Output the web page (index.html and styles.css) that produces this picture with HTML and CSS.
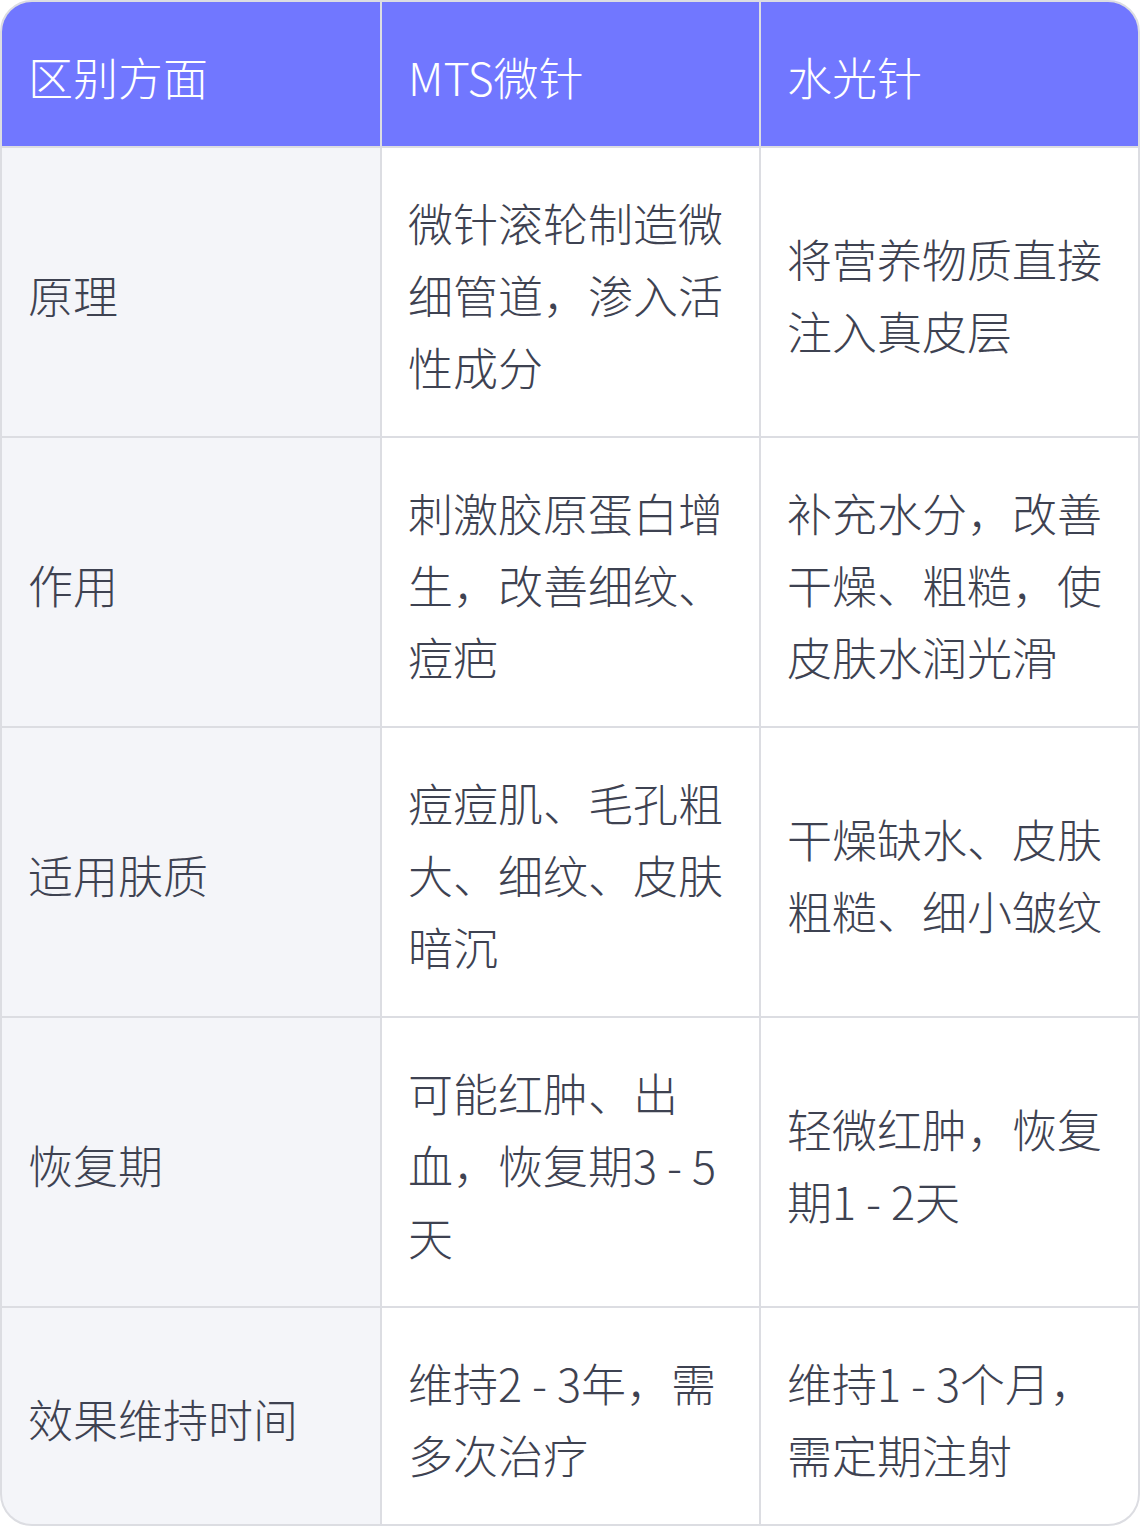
FILE: index.html
```html
<!DOCTYPE html>
<html lang="zh-CN">
<head>
<meta charset="utf-8">
<title>MTS微针 vs 水光针</title>
<link rel="stylesheet" href="styles.css">
</head>
<body>
<div class="table">
  <div class="cell head">区别方面</div>
  <div class="cell head">MTS微针</div>
  <div class="cell head">水光针</div>

  <div class="cell label">原理</div>
  <div class="cell">微针滚轮制造微细管道，渗入活性成分</div>
  <div class="cell">将营养物质直接注入真皮层</div>

  <div class="cell label">作用</div>
  <div class="cell">刺激胶原蛋白增生，改善细纹、痘疤</div>
  <div class="cell">补充水分，改善干燥、粗糙，使皮肤水润光滑</div>

  <div class="cell label">适用肤质</div>
  <div class="cell">痘痘肌、毛孔粗大、细纹、皮肤暗沉</div>
  <div class="cell">干燥缺水、皮肤粗糙、细小皱纹</div>

  <div class="cell label">恢复期</div>
  <div class="cell">可能红肿、出血，恢复期3 - 5天</div>
  <div class="cell">轻微红肿，恢复期1 - 2天</div>

  <div class="cell label">效果维持时间</div>
  <div class="cell">维持2 - 3年，需多次治疗</div>
  <div class="cell">维持1 - 3个月，需定期注射</div>
</div>
</body>
</html>
```
FILE: styles.css
```css
html, body {
  margin: 0;
  padding: 0;
  background: #ffffff;
}

.table {
  width: 1140px;
  box-sizing: border-box;
  border: 2px solid #dcdde2;
  border-radius: 32px;
  overflow: hidden;
  display: grid;
  grid-template-columns: 378px 377px 377px;
  gap: 2px;
  background: #dcdde2;
  font-family: "Noto Sans CJK SC", "Noto Sans", sans-serif;
  font-weight: 300;
  font-size: 45px;
  line-height: 72px;
  color: #3e4251;
}

.cell {
  display: flex;
  align-items: center;
  padding: 39px 28px 33px 26px;
  background: #ffffff;
  word-break: break-all;
}

.head {
  background: #7177ff;
  color: #ffffff;
}

.label {
  background: #f4f5f9;
}
```
